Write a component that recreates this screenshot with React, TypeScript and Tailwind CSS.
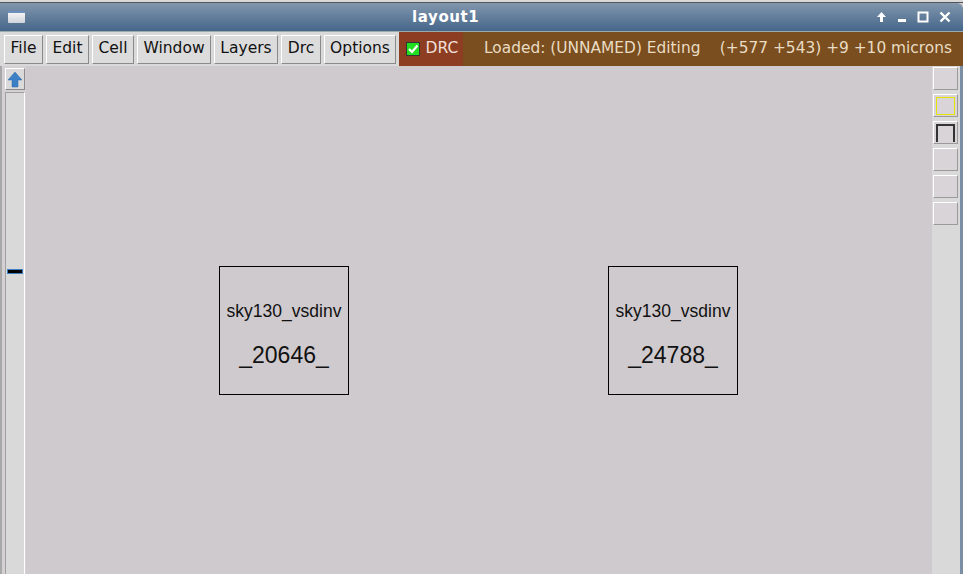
import React from "react";

const menus = ["File", "Edit", "Cell", "Window", "Layers", "Drc", "Options"];
const menuWidths = ["w-[39px]", "w-[43px]", "w-[42px]", "w-[74px]", "w-[64px]", "w-[40px]", "w-[72px]"];

const cells = [
  { name: "sky130_vsdinv", id: "_20646_" },
  { name: "sky130_vsdinv", id: "_24788_" },
];

function CellBox({ name, id }: { name: string; id: string }) {
  return (
    <div
      className="w-[130px] h-[129px] border border-black flex flex-col items-center text-[#111]"
      style={{ fontFamily: '"Liberation Sans", Arial, sans-serif' }}
    >
      <div className="text-[17.5px] leading-none mt-[36px]">{name}</div>
      <div className="text-[23px] leading-none mt-[23px]">{id}</div>
    </div>
  );
}

export default function App() {
  return (
    <div
      className="w-[963px] h-[574px] overflow-hidden flex flex-col bg-[#cfcacd]"
      style={{ fontFamily: '"DejaVu Sans", "Liberation Sans", sans-serif' }}
    >
      {/* desktop behind the window */}
      <div className="h-[3px] bg-[#d8d8d8] border-b border-[#555]" />

      {/* title bar */}
      <div className="h-[28px] flex items-center rounded-tr-[6px] bg-gradient-to-b from-[#8197ad] to-[#46668a]">
        <div className="ml-[8px] w-[17px] h-[12px] bg-gradient-to-b from-[#f4f4f4] to-[#cfd4da] border-t-2 border-[#6d8fbf] rounded-[1px]" />
        <span className="ml-[387px] text-white font-bold text-[15px] tracking-[0.6px]">layout1</span>
        <div className="ml-auto mr-[12px] flex items-center gap-[10px] text-white">
          <svg width="11" height="12" viewBox="0 0 11 12">
            <path d="M5.5 1 L10 6 H7 V11 H4 V6 H1 Z" fill="white" />
          </svg>
          <svg width="10" height="12" viewBox="0 0 10 12">
            <rect x="1" y="8" width="8" height="3" fill="white" />
          </svg>
          <svg width="12" height="12" viewBox="0 0 12 12">
            <rect x="1.5" y="1.5" width="9" height="9" fill="none" stroke="white" strokeWidth="2" />
          </svg>
          <svg width="12" height="12" viewBox="0 0 12 12">
            <path d="M1.5 1.5 L10.5 10.5 M10.5 1.5 L1.5 10.5" stroke="white" strokeWidth="2.4" />
          </svg>
        </div>
      </div>

      {/* menu bar */}
      <div className="h-[35px] flex items-stretch bg-[#d9d9d9] border-t border-[#9aa]">
        <div className="flex items-center gap-[3px] pl-[4px] pr-[3px]">
          {menus.map((m, i) => (
            <div
              key={m}
              className={`${menuWidths[i]} h-[29px] flex items-center justify-center text-[15.5px] text-[#111] bg-[#dcdcdc] border border-t-white border-l-white border-r-[#8a8a8a] border-b-[#8a8a8a]`}
            >
              {m}
            </div>
          ))}
        </div>
        <div className="w-[64px] bg-[#8d3d22] flex items-center justify-center gap-[6px] pl-[2px] text-[#f0e0d8] text-[15.5px]">
          <div className="w-[14px] h-[14px] bg-[#22dd22] border border-[#333] flex items-center justify-center">
            <svg width="12" height="12" viewBox="0 0 12 12">
              <path d="M2 6 L5 9 L10.5 2.5" fill="none" stroke="white" strokeWidth="2.2" />
            </svg>
          </div>
          DRC
        </div>
        <div className="flex-1 bg-[#7a4e1e] flex items-center justify-between pl-[21px] pr-[11px] text-[15.4px] text-[#e8dcc4]">
          <span>Loaded: (UNNAMED) Editing</span>
          <span>(+577 +543) +9 +10 microns</span>
        </div>
      </div>

      {/* main area */}
      <div className="flex-1 flex">
        {/* left scrollbar */}
        <div className="w-[26px] pl-[3px] pr-[1px] pt-[2px] flex flex-col gap-[2px] bg-[#d4d0d4] border-l-2 border-[#a8a8a8]">
          <div className="h-[22px] bg-[#dadada] border border-t-white border-l-white border-r-[#8a8a8a] border-b-[#8a8a8a] flex items-center justify-center">
            <svg width="16" height="17" viewBox="0 0 16 17">
              <path d="M8 1 L15 9 H11 V16 H5 V9 H1 Z" fill="#3b7fc4" stroke="#2e6aa8" strokeWidth="0.5" />
            </svg>
          </div>
          <div className="flex-1 bg-[#d9d9d9] border-l border-r border-t border-[#a0a0a0] border-r-white relative">
            <div className="absolute left-[1px] right-[1px] top-[176px] h-[5px] bg-black border border-[#3b7fc4]" />
          </div>
        </div>

        {/* canvas */}
        <div className="flex-1 bg-[#cfcacd]">
          <div className="flex items-start pt-[200px] pl-[193px] gap-[259px]">
            {cells.map((c) => (
              <CellBox key={c.id} name={c.name} id={c.id} />
            ))}
          </div>
        </div>

        {/* right layer palette */}
        <div className="w-[31px] bg-[#d9d9d9] flex flex-col items-start pt-[1px] pl-[1px] gap-[4px] border-r-[3px] border-[#7b8ea3]">
          {[0, 1, 2, 3, 4, 5].map((i) => (
            <div
              key={i}
              className="w-[25px] h-[23px] bg-[#d8d4d8] border border-t-white border-l-white border-r-[#9a9a9a] border-b-[#9a9a9a] flex items-center justify-center"
            >
              {i === 1 && <div className="w-[19px] h-[18px] shrink-0 border-[1.5px] border-[#e4e400]" />}
              {i === 2 && <div className="w-[19px] h-[18px] shrink-0 border-t-2 border-l-2 border-r-2 border-[#333]" />}
            </div>
          ))}
        </div>
      </div>
    </div>
  );
}
